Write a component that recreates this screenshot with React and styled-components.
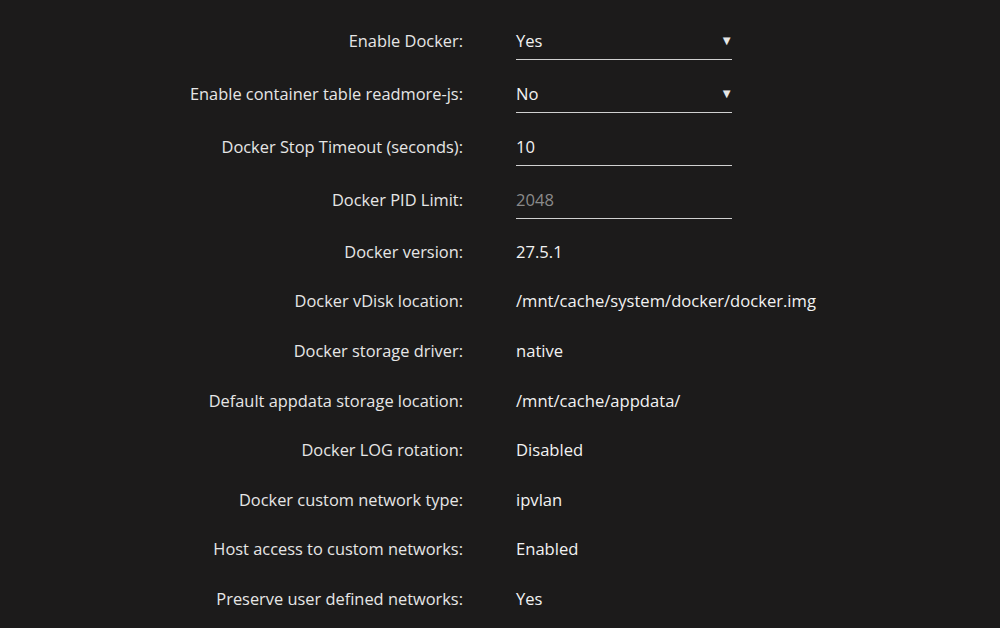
import React from "react";
import styled, { createGlobalStyle } from "styled-components";

const GlobalStyle = createGlobalStyle`
  html, body {
    margin: 0;
    padding: 0;
    background: #1c1b1b;
  }
  body {
    font-family: "Open Sans", "Noto Sans", sans-serif;
    color: #f2f2f2;
  }
`;

const Settings = styled.dl`
  margin: 0;
  padding-top: 15px;
  display: grid;
  grid-template-columns: 463px 1fr;
  column-gap: 53px;
`;

const Label = styled.dt`
  height: ${({ $tall }) => ($tall ? "53px" : "49.6px")};
  display: flex;
  align-items: ${({ $tall }) => ($tall ? "flex-start" : "center")};
  padding-top: ${({ $tall }) => ($tall ? "15px" : "0")};
  box-sizing: border-box;
  justify-content: flex-end;
  font-size: 16.4px;
  line-height: 22px;
  color: #e6e6e6;
  white-space: nowrap;
`;

const Value = styled.dd`
  margin: 0;
  height: ${({ $tall }) => ($tall ? "53px" : "49.6px")};
  display: flex;
  align-items: ${({ $tall }) => ($tall ? "flex-start" : "center")};
  padding-top: ${({ $tall }) => ($tall ? "15px" : "0")};
  box-sizing: border-box;
  font-size: 16.6px;
  line-height: 22px;
  color: #f2f2f2;
`;

const Field = styled.div`
  width: 216px;
  height: 30px;
  box-sizing: border-box;
  border-bottom: 1px solid #d0d0d0;
  display: flex;
  justify-content: space-between;
  align-items: flex-start;
  color: ${({ $placeholder }) => ($placeholder ? "#8a8a8a" : "#f2f2f2")};
`;

const Arrow = styled.span`
  font-size: 13px;
  line-height: 20px;
  margin-right: -1px;
  color: #e6e6e6;
`;

const fields = [
  { label: "Enable Docker:", value: "Yes", select: true },
  { label: "Enable container table readmore-js:", value: "No", select: true },
  { label: "Docker Stop Timeout (seconds):", value: "10" },
  { label: "Docker PID Limit:", value: "2048", placeholder: true },
];

const info = [
  ["Docker version:", "27.5.1"],
  ["Docker vDisk location:", "/mnt/cache/system/docker/docker.img"],
  ["Docker storage driver:", "native"],
  ["Default appdata storage location:", "/mnt/cache/appdata/"],
  ["Docker LOG rotation:", "Disabled"],
  ["Docker custom network type:", "ipvlan"],
  ["Host access to custom networks:", "Enabled"],
  ["Preserve user defined networks:", "Yes"],
];

export default function App() {
  return (
    <>
      <GlobalStyle />
      <Settings>
        {fields.map((f) => (
          <React.Fragment key={f.label}>
            <Label $tall>{f.label}</Label>
            <Value $tall>
              <Field $placeholder={f.placeholder}>
                <span>{f.value}</span>
                {f.select && <Arrow>▼</Arrow>}
              </Field>
            </Value>
          </React.Fragment>
        ))}
        {info.map(([label, value]) => (
          <React.Fragment key={label}>
            <Label>{label}</Label>
            <Value>{value}</Value>
          </React.Fragment>
        ))}
      </Settings>
    </>
  );
}
